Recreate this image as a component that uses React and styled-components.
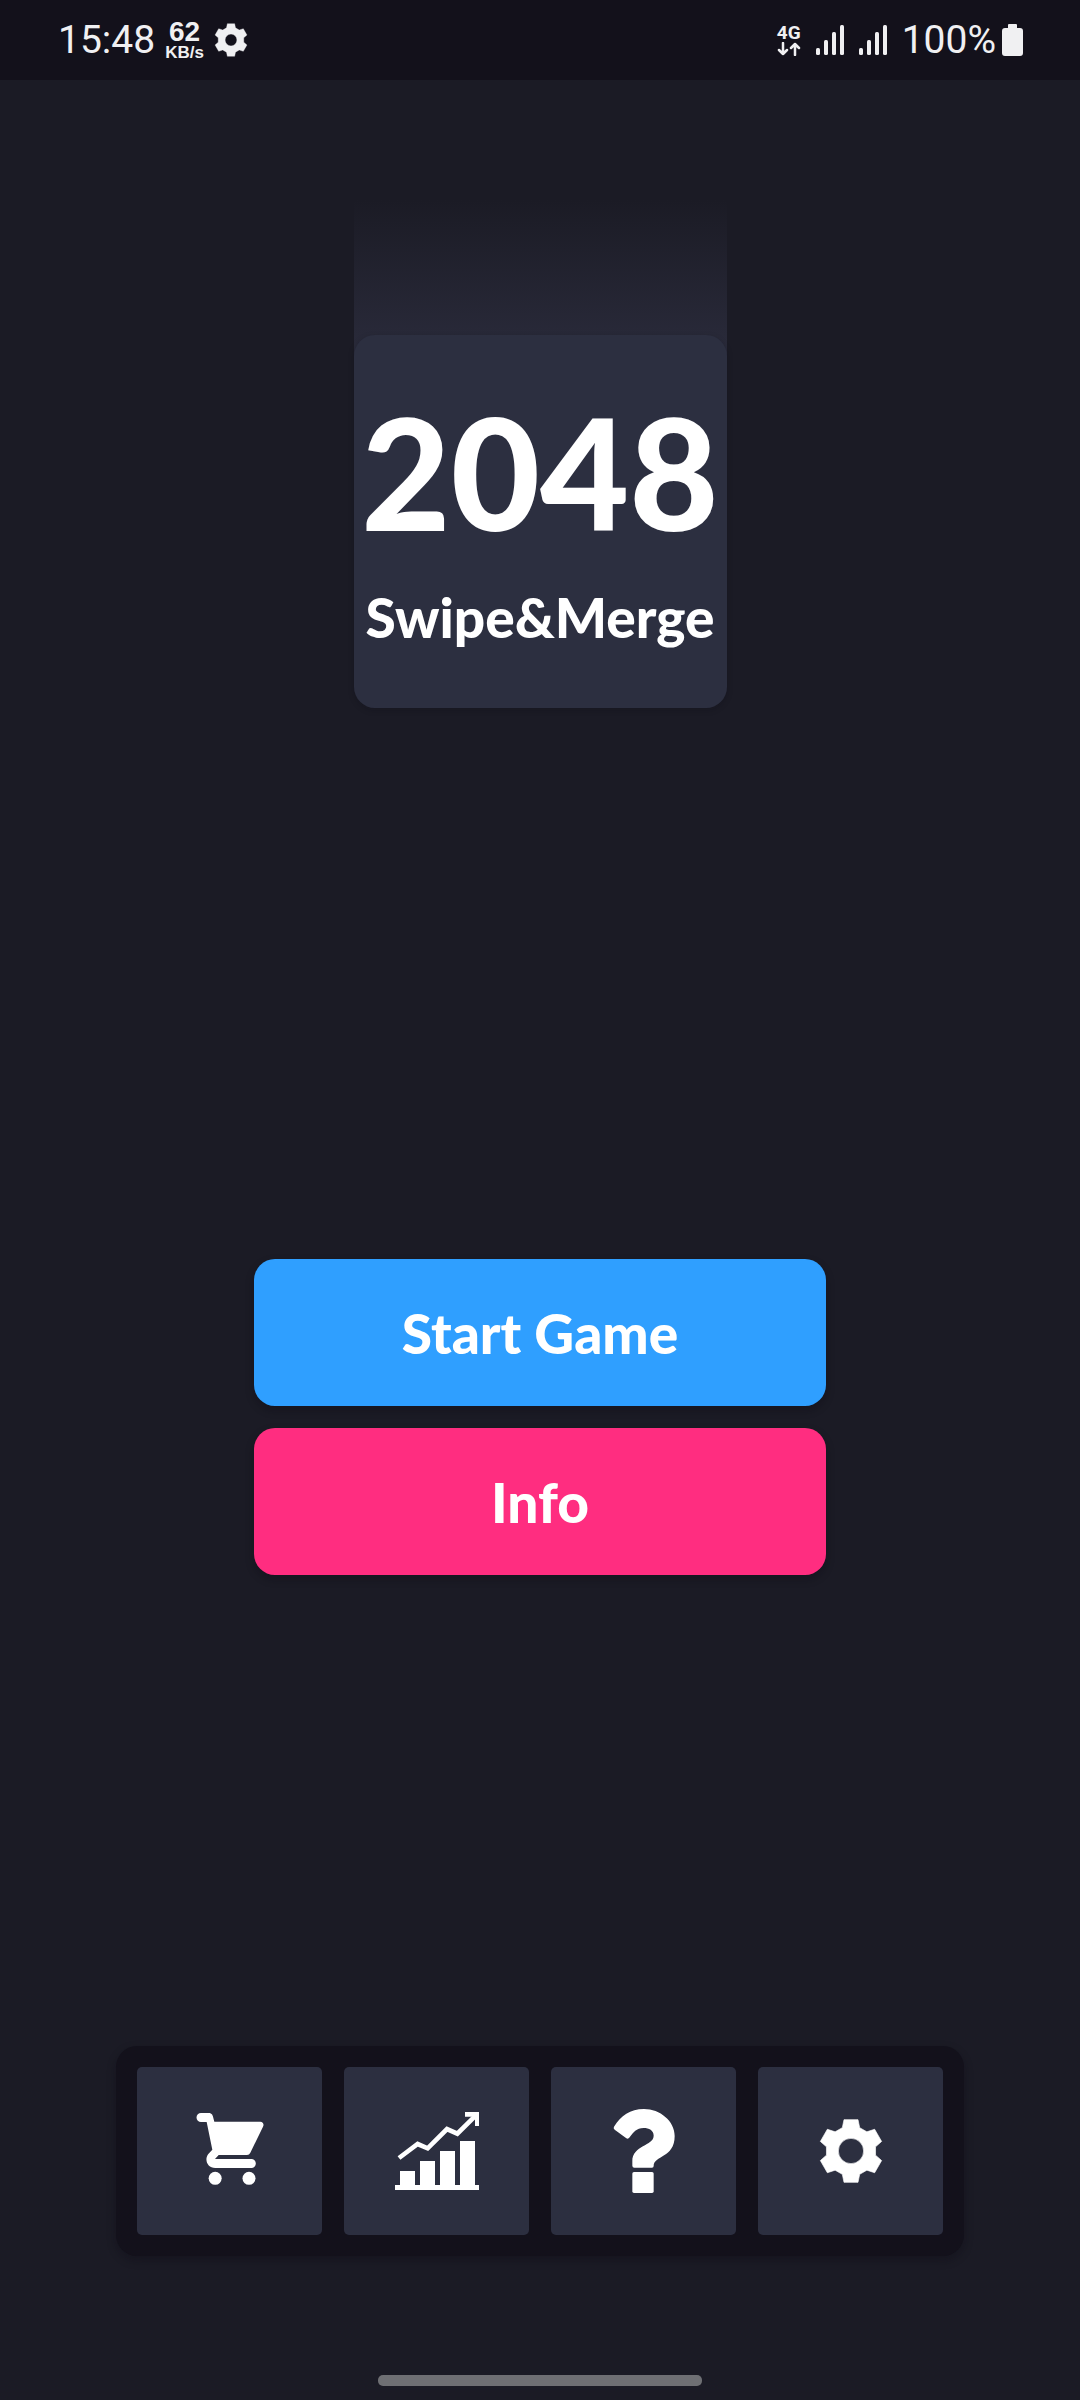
import React from "react";
import styled, { createGlobalStyle } from "styled-components";

const GlobalStyle = createGlobalStyle`
  *, *::before, *::after { box-sizing: border-box; }
  body {
    margin: 0;
    background: #1b1b25;
    color: #fff;
    font-family: Lato, "Open Sans", sans-serif;
  }
`;

const Page = styled.div`
  min-height: 100vh;
  display: flex;
  flex-direction: column;
  align-items: center;
  background: #1b1b25;
`;

const StatusBar = styled.header`
  width: 100%;
  height: 80px;
  padding: 0 57px 0 58px;
  display: flex;
  align-items: center;
  justify-content: space-between;
  background: #13111b;
  color: #f0f0f2;
`;

const StatusGroup = styled.div`
  display: flex;
  align-items: center;
  gap: ${(p) => p.$gap}px;
`;

const StatusText = styled.span`
  font: 400 39px/48px Roboto, sans-serif;
`;

const Speed = styled.div`
  display: flex;
  flex-direction: column;
  align-items: center;
  font-family: "Liberation Sans", sans-serif;
  font-weight: 700;
`;

const SpeedValue = styled.span`
  font-size: 28px;
  line-height: 26px;
`;

const SpeedUnit = styled.span`
  font-size: 17px;
  line-height: 16px;
`;

const Network = styled.div`
  display: flex;
  flex-direction: column;
  align-items: center;
  font: 700 19px/18px Roboto, sans-serif;
`;

const Main = styled.main`
  flex: 1;
  width: 100%;
  display: flex;
  flex-direction: column;
  align-items: center;
  padding: 120px 24px 0;
`;

const Logo = styled.div`
  width: 373px;
  padding-top: 135px;
  background: linear-gradient(#1b1b25, #2a2b3b) no-repeat 0 0 / 100% 156px;
`;

const LogoCard = styled.div`
  height: 373px;
  display: flex;
  flex-direction: column;
  align-items: center;
  justify-content: center;
  gap: 28px;
  border-radius: 21px;
  background: #2c2f40;
  box-shadow: 0 2px 6px rgba(10, 8, 18, 0.2);
`;

const Title = styled.h1`
  margin: 0;
  font-size: 154px;
  line-height: 162px;
  font-weight: 900;
`;

const Subtitle = styled.p`
  margin: 0;
  font-size: 55px;
  line-height: 72px;
  font-weight: 900;
`;

const Actions = styled.div`
  width: 100%;
  max-width: 572px;
  margin-top: 551px;
  display: flex;
  flex-direction: column;
  gap: 22px;
`;

const ActionButton = styled.button`
  height: 147px;
  border: 0;
  border-radius: 21px;
  background: ${(p) => p.$color};
  color: #fff;
  font: 900 55px/72px Lato, sans-serif;
  box-shadow: 0 4px 8px rgba(10, 8, 18, 0.3);
  cursor: pointer;
`;

const Dock = styled.nav`
  width: 100%;
  max-width: 848px;
  margin-top: 471px;
  padding: 21px;
  display: grid;
  grid-template-columns: repeat(4, 1fr);
  gap: 22px;
  border-radius: 21px;
  background: #13111b;
  box-shadow: 0 4px 10px rgba(10, 8, 18, 0.3);
`;

const DockButton = styled.button`
  height: 168px;
  padding: 0;
  display: flex;
  align-items: center;
  justify-content: center;
  border: 0;
  border-radius: 5px;
  background: #2c2f40;
  color: #fff;
  cursor: pointer;
`;

const HomeIndicator = styled.div`
  width: 30%;
  height: 11px;
  margin: 24px 0 14px;
  border-radius: 5px;
  background: #6e6f73;
`;

const Icon = styled.svg`
  display: block;
  flex: none;
  fill: currentColor;
`;

const GEAR_TOOTH = [
  [-26, -70],
  [-21, -94],
  [21, -94],
  [26, -70],
];

function gearOutline() {
  const points = [];
  for (let i = 0; i < 6; i += 1) {
    const a = (i * Math.PI) / 3;
    GEAR_TOOTH.forEach(([x, y]) => {
      const px = 126 + x * Math.cos(a) - y * Math.sin(a);
      const py = 126 + x * Math.sin(a) + y * Math.cos(a);
      points.push(`${px.toFixed(1)} ${py.toFixed(1)}`);
    });
  }
  return `M${points.join("L")}Z`;
}

const GEAR_OUTLINE = gearOutline();

function GearIcon({ size, hole, viewBox = "0 0 252 252" }) {
  const d = `${GEAR_OUTLINE}M${126 - hole} 126a${hole} ${hole} 0 1 0 ${2 * hole} 0a${hole} ${hole} 0 1 0 ${-2 * hole} 0Z`;
  return (
    <Icon width={size} height={size} viewBox={viewBox} aria-hidden="true">
      <path fillRule="evenodd" stroke="currentColor" strokeWidth="2" strokeLinejoin="round" d={d} />
    </Icon>
  );
}

function CartIcon() {
  return (
    <Icon width="84" height="84" viewBox="0 0 252 252" aria-hidden="true">
      <path d="M39 12H62C72 12 75 20 76 27L79 38H217C225 38 229 46 225 53L187 131Q184 138 177 138H92L81 150H190A13.5 13.5 0 0 1 190 177H82C58 177 48 152 61 135L73 122L56 39H39A13.5 13.5 0 0 1 39 12Z" />
      <circle cx="81.500" cy="208" r="19.500" />
      <circle cx="183" cy="208" r="19.500" />
    </Icon>
  );
}

function ChartIcon() {
  return (
    <Icon width="84" height="78" viewBox="0 0 252 234" aria-hidden="true">
      <path d="M0 219H15V177H60V219H75V147H120V219H135V117H180V219H195V87H240V219H252V234H0ZM210 0H252V42H240V14H210Z" />
      <path d="M12 138L68 96L98 109L156 51L187 65L245 8" fill="none" stroke="currentColor" strokeWidth="14" />
    </Icon>
  );
}

function QuestionIcon() {
  return (
    <Icon width="84" height="84" viewBox="0 0 252 252" aria-hidden="true">
      <path d="M36 53C57 20 84 0 126 0C174 0 218 36 218 81C218 148 155 139 155 171Q155 176 150 176H97Q91 176 91 170V157C91 108 155 111 155 80C155 64 141 57 125 57C103 57 94 70 83 85Q78 92 72 87L38 62Q33 58 36 53Z" />
      <rect x="91" y="189" width="64" height="63" rx="5" />
    </Icon>
  );
}

function DataArrows() {
  return (
    <Icon width="24" height="14" viewBox="0 0 24 14" aria-hidden="true">
      <path d="M6 1V12M2 8L6 12L10 8M18 13V2M14 6L18 2L22 6" fill="none" stroke="currentColor" strokeWidth="2.500" strokeLinecap="round" strokeLinejoin="round" />
    </Icon>
  );
}

function SignalIcon() {
  return (
    <Icon width="28" height="30" viewBox="0 0 28 30" aria-hidden="true">
      <rect x="0" y="23" width="4" height="7" rx="1.500" />
      <rect x="8" y="15" width="4" height="15" rx="1.500" />
      <rect x="16" y="7" width="4" height="23" rx="1.500" />
      <rect x="24" y="0" width="4" height="30" rx="1.500" />
    </Icon>
  );
}

function BatteryIcon() {
  return (
    <Icon width="21" height="32" viewBox="0 0 21 32" aria-hidden="true">
      <path d="M7 0H14Q15 0 15 1V4H18Q21 4 21 7V29Q21 32 18 32H3Q0 32 0 29V7Q0 4 3 4H6V1Q6 0 7 0Z" />
    </Icon>
  );
}

const DOCK_ITEMS = [
  { label: "Shop", icon: <CartIcon /> },
  { label: "Statistics", icon: <ChartIcon /> },
  { label: "Help", icon: <QuestionIcon /> },
  { label: "Settings", icon: <GearIcon size={84} hole={38} /> },
];

export default function App() {
  return (
    <Page>
      <GlobalStyle />
      <StatusBar>
        <StatusGroup $gap={10}>
          <StatusText>15:48</StatusText>
          <Speed>
            <SpeedValue>62</SpeedValue>
            <SpeedUnit>KB/s</SpeedUnit>
          </Speed>
          <GearIcon size={34} hole={34} viewBox="28 28 196 196" />
        </StatusGroup>
        <StatusGroup $gap={15}>
          <Network>
            <span>4G</span>
            <DataArrows />
          </Network>
          <SignalIcon />
          <SignalIcon />
          <StatusGroup $gap={6}>
            <StatusText>100%</StatusText>
            <BatteryIcon />
          </StatusGroup>
        </StatusGroup>
      </StatusBar>
      <Main>
        <Logo>
          <LogoCard>
            <Title>2048</Title>
            <Subtitle>Swipe&amp;Merge</Subtitle>
          </LogoCard>
        </Logo>
        <Actions>
          <ActionButton type="button" $color="#2f9fff">Start Game</ActionButton>
          <ActionButton type="button" $color="#ff2d80">Info</ActionButton>
        </Actions>
        <Dock aria-label="Main menu">
          {DOCK_ITEMS.map((item) => (
            <DockButton key={item.label} type="button" aria-label={item.label}>
              {item.icon}
            </DockButton>
          ))}
        </Dock>
      </Main>
      <HomeIndicator />
    </Page>
  );
}
